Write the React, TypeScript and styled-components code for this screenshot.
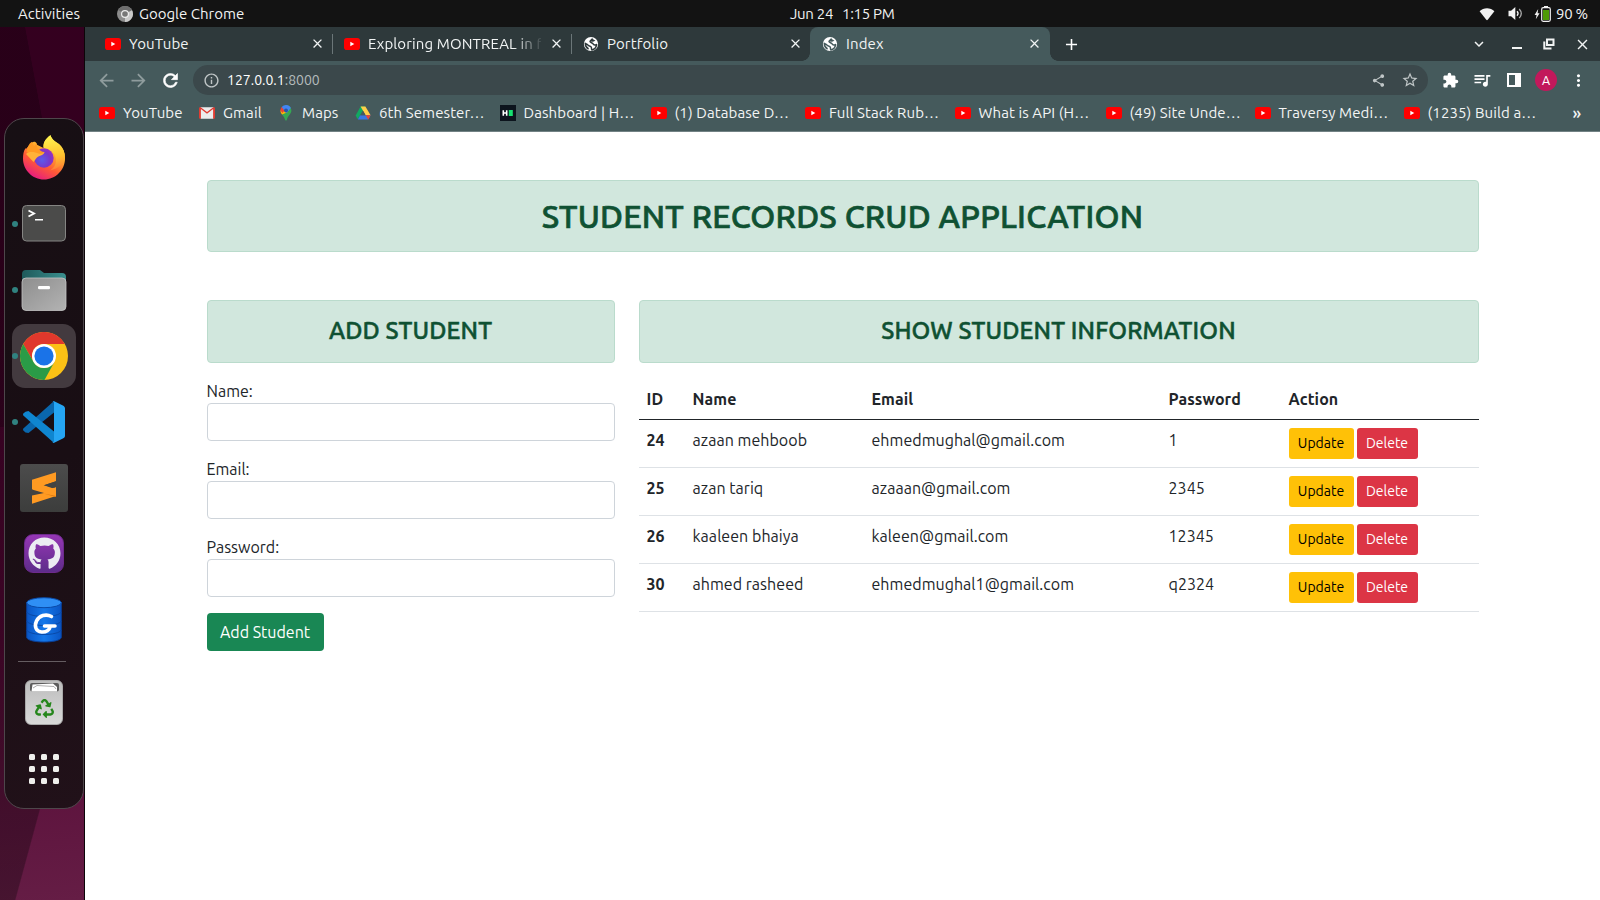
import React from 'react';
import styled, { createGlobalStyle, css } from 'styled-components';
import {
  MdAdd, MdArrowBack, MdArrowForward, MdClose, MdExpandMore, MdExtension, MdInfoOutline,
  MdMoreVert, MdQueueMusic, MdRefresh, MdShare, MdStarBorder,
} from 'react-icons/md';
import { FaGithub, FaRecycle } from 'react-icons/fa';

const GlobalStyle = createGlobalStyle`
  *, *::before, *::after { box-sizing: border-box; }
  body { margin: 0; overflow: hidden; font-family: Ubuntu, "Noto Sans", "Open Sans", sans-serif; }
  svg { display: block; flex: none; }
  button, input { font-family: inherit; margin: 0; }
`;

/* ---------- Desktop shell ---------- */

const Desktop = styled.div`
  width: 1600px;
  height: 900px;
  display: flex;
  flex-direction: column;
  overflow: hidden;
  background: #131313;
`;

const TopBar = styled.header`
  height: 27px;
  flex: none;
  display: flex;
  align-items: center;
  background: #131313;
  color: #f2f2f2;
  font-size: 15px;
  line-height: 27px;
  white-space: pre;
`;

const TopBarLeft = styled.div`
  width: 790px;
  padding-left: 18px;
  display: flex;
  align-items: center;
`;

const Activities = styled.span`
  width: 99px;
  letter-spacing: 0.05px;
`;

const AppName = styled.span`
  margin-left: 6px;
`;

const Clock = styled.div`
  flex: 1;
  letter-spacing: -0.3px;
`;

const Day = styled.span`
  display: inline-block;
  width: 52px;
`;

const Status = styled.div`
  display: flex;
  align-items: center;
  padding-right: 12px;
`;

const Percent = styled.span`
  width: 32px;
  letter-spacing: -0.3px;
`;

const Body = styled.div`
  flex: 1;
  display: flex;
  min-height: 0;
`;

const Wallpaper = styled.aside`
  width: 85px;
  flex: none;
  padding: 91px 0 0 4px;
  border-right: 1px solid #0c0509;
  background:
    linear-gradient(105.2deg, #0000004d 78.4%, transparent 78.8%),
    linear-gradient(79.4deg, #00000038 62.7%, transparent 63.1%) 0 0 / 84px 400px no-repeat,
    linear-gradient(175deg, #4a002d 0%, #4a002d 30%, #530734 70%, #651d45 100%);
`;

/* ---------- Dock ---------- */

const Dock = styled.nav`
  width: 80px;
  height: 691px;
  padding: 5px 0 0;
  border: 1px solid #4e474b;
  border-radius: 20px;
  background: linear-gradient(160deg, #170f14 0%, #190e14 50%, #211119 100%);
  display: flex;
  flex-direction: column;
  align-items: center;
`;

const DockCell = styled.div`
  width: 78px;
  height: 66px;
  flex: none;
  display: grid;
  grid-template-columns: 7px 64px 7px;
  align-items: center;
`;

const DockTile = styled.div<{ $active?: boolean; $drop?: number }>`
  grid-column: 2;
  height: 64px;
  margin-top: ${(p) => p.$drop ?? 0}px;
  border-radius: 13px;
  display: flex;
  align-items: center;
  justify-content: center;
  position: relative;
  ${(p) => p.$active && css`background: #433a3f;`}
`;

const RunningDot = styled.i`
  position: absolute;
  left: 0;
  top: 29px;
  width: 6px;
  height: 6px;
  border-radius: 50%;
  background: #308280;
`;

const DockDivider = styled.hr`
  width: 48px;
  height: 1px;
  border: 0;
  margin: 9px 4px 7px 0;
  background: #655d61;
  flex: none;
`;

const SublimeTile = styled.div`
  width: 48px;
  height: 48px;
  border-radius: 3px;
  background: linear-gradient(#4c4c4c, #3c3d3c);
  display: grid;
  place-items: center;
`;

const GithubTile = styled.div`
  width: 40px;
  height: 39px;
  border-radius: 9px;
  border: 1px solid #6d2a8c;
  background: linear-gradient(#9637b5, #5d2c8a);
  color: #ececf2;
  display: grid;
  place-items: center;
`;

const TrashTile = styled.div`
  width: 38px;
  height: 45px;
  padding-top: 1px;
  border-radius: 6px;
  border: 1px solid #a9a9a9;
  background: linear-gradient(#bdbdbd, #d9d9d9);
  color: #26861c;
  display: flex;
  flex-direction: column;
  align-items: center;
  gap: 7px;
`;

const AppsGrid = styled.div`
  display: grid;
  grid-template-columns: repeat(3, 6px);
  grid-auto-rows: 6px;
  gap: 6px;
`;

const AppsDot = styled.i`
  border-radius: 1.5px;
  background: #efefec;
`;

/* ---------- Browser chrome ---------- */

const Browser = styled.main`
  flex: 1;
  min-width: 0;
  display: flex;
  flex-direction: column;
  background: #fff;
`;

const TabStrip = styled.div`
  height: 34px;
  flex: none;
  display: flex;
  align-items: center;
  padding-left: 8px;
  background: #2e393b;
  color: #f1f4f4;
`;

const Tab = styled.div<{ $active?: boolean; $divided?: boolean }>`
  position: relative;
  width: 239px;
  height: 34px;
  flex: none;
  display: flex;
  align-items: center;
  padding: 0 7px 1px 12px;
  ${(p) => p.$divided && css`
    &::after {
      content: '';
      position: absolute;
      right: -1px;
      top: 7px;
      width: 1px;
      height: 20px;
      background: #6b7678;
    }
  `}
  ${(p) => p.$active && css`
    width: 240px;
    background: #455a5c;
    border-radius: 8px 8px 0 0;
    &::before, &::after {
      content: '';
      position: absolute;
      bottom: 0;
      width: 8px;
      height: 8px;
    }
    &::before { left: -8px; background: radial-gradient(circle at 0 0, transparent 7.5px, #455a5c 8px); }
    &::after { right: -8px; background: radial-gradient(circle at 100% 0, transparent 7.5px, #455a5c 8px); }
  `}
`;

const TabTitle = styled.span<{ $fade?: boolean }>`
  width: 173px;
  margin-left: 8px;
  margin-right: 7.5px;
  overflow: hidden;
  white-space: nowrap;
  font-size: 15px;
  line-height: 22px;
  letter-spacing: 0.12px;
  ${(p) => p.$fade && css`mask-image: linear-gradient(90deg, #000 145px, transparent 176px);`}
`;

const FaviconSlot = styled.span`
  width: 16px;
  flex: none;
  display: flex;
  justify-content: center;
  color: #fff;
`;

const NewTab = styled.div`
  margin: 0 auto 0 9px;
  width: 24px;
  display: flex;
  justify-content: center;
  color: #fff;
`;

const WindowControls = styled.div`
  display: grid;
  grid-template-columns: 44px 32px 32px 34px;
  justify-items: center;
  align-items: center;
  margin-right: 1px;
  color: #f1f3f3;
`;

const Toolbar = styled.div`
  height: 38px;
  flex: none;
  display: flex;
  align-items: center;
  background: #455a5c;
  color: #fff;
  padding: 0 6px 0 5px;
`;

const ToolButton = styled.div<{ $dim?: boolean; $w?: number }>`
  width: ${(p) => p.$w ?? 32}px;
  flex: none;
  display: flex;
  justify-content: center;
  color: ${(p) => (p.$dim ? '#8f9c9d' : '#fff')};
`;

const ReloadButton = styled(ToolButton)`
  path:last-child {
    stroke: currentColor;
    stroke-width: 0.7px;
  }
  path[fill='none'] {
    stroke: none;
  }
`;

const Omnibox = styled.div`
  flex: 1;
  height: 30px;
  margin: 0 6px 0 7px;
  padding: 0 2px 0 10px;
  border-radius: 15px;
  background: #3b484b;
  display: flex;
  align-items: center;
  color: #c0c6c7;
`;

const Url = styled.span`
  flex: 1;
  margin-left: 7px;
  font-size: 14px;
  line-height: 20px;
  color: #b5bcbd;
`;

const Host = styled.span`
  color: #fff;
`;

const Avatar = styled.div`
  width: 22px;
  height: 22px;
  margin: 0 5px;
  flex: none;
  border-radius: 50%;
  background: #c2185b;
  color: #fff;
  font-size: 12.5px;
  line-height: 22px;
  text-align: center;
`;

const BookmarksBar = styled.div`
  height: 33px;
  flex: none;
  display: flex;
  align-items: center;
  padding: 0 0 4px 14px;
  background: #455a5c;
  border-bottom: 1px solid #728284;
  color: #f3f5f5;
`;

const Bookmark = styled.div<{ $width: number }>`
  width: ${(p) => p.$width}px;
  flex: none;
  display: flex;
  align-items: center;
  gap: 8px;
  white-space: nowrap;
  font-size: 15px;
  line-height: 22px;
  letter-spacing: 0.1px;
`;

const More = styled.span`
  flex: 1;
  text-align: center;
  font-size: 17px;
  font-weight: 500;
  line-height: 20px;
  padding-left: 4px;
`;

/* ---------- Page ---------- */

const Page = styled.section`
  width: 1272px;
  margin-left: 121.5px;
  padding-top: 48px;
  color: #212529;
  font-size: 16px;
  line-height: 24px;
`;

const Banner = styled.div`
  padding: 16px;
  border: 1px solid #badbcc;
  border-radius: 4px;
  background: #d1e7dd;
  color: #0f5132;
  text-align: center;
`;

const PageTitle = styled.h1`
  margin: 0;
  font-size: 32px;
  font-weight: 500;
  line-height: 38.4px;
  letter-spacing: 0.23px;
  -webkit-text-stroke: 0.7px currentColor;
`;

const SectionTitle = styled.h2`
  margin: 0;
  font-size: 24px;
  font-weight: 500;
  line-height: 28.8px;
  letter-spacing: 0.14px;
  -webkit-text-stroke: 0.5px currentColor;
`;

const Columns = styled.div`
  margin-top: 47.6px;
  display: grid;
  grid-template-columns: 408px 840px;
  gap: 24px;
  align-items: start;
`;

const Form = styled.form`
  margin-top: 16px;
`;

const Field = styled.label`
  display: block;
  margin-bottom: 16px;
`;

const Input = styled.input`
  display: block;
  width: 100%;
  height: 38px;
  border: 1px solid #ced4da;
  border-radius: 4px;
  background: #fff;
`;

const SubmitButton = styled.button`
  width: 117px;
  height: 38px;
  padding: 0;
  border: 0;
  border-radius: 4px;
  background: #198754;
  color: #fff;
  font-size: 16px;
  line-height: 24px;
`;

const Table = styled.table`
  margin-top: 16px;
  width: 840px;
  table-layout: fixed;
  border-collapse: separate;
  border-spacing: 0;
`;

const Col = styled.col<{ $w: number }>`
  width: ${(p) => p.$w}px;
`;

const HeadCell = styled.th`
  height: 41px;
  padding: 8px;
  text-align: left;
  vertical-align: top;
  font-weight: 700;
  letter-spacing: 0.08px;
  border-bottom: 1px solid #212529;
`;

const Cell = styled.td<{ $bold?: boolean }>`
  height: 48px;
  padding: 8px;
  vertical-align: top;
  white-space: nowrap;
  font-weight: ${(p) => (p.$bold ? 700 : 400)};
  letter-spacing: 0.04px;
  border-bottom: 1px solid #dee2e6;
`;

const Actions = styled.div`
  display: flex;
  gap: 3px;
`;

const SmallButton = styled.button<{ $kind: 'warning' | 'danger' }>`
  width: ${(p) => (p.$kind === 'warning' ? 65 : 61)}px;
  height: 31px;
  padding: 0;
  border: 0;
  border-radius: 3px;
  font-size: 14px;
  line-height: 21px;
  background: ${(p) => (p.$kind === 'warning' ? '#ffc107' : '#dc3545')};
  color: ${(p) => (p.$kind === 'warning' ? '#000' : '#fff')};
`;

/* ---------- Drawings ---------- */

const YouTubeIcon = () => (
  <svg width="16" height="16" viewBox="0 0 16 16">
    <rect x="0" y="2" width="16" height="12" rx="2.8" fill="#f00" />
    <path d="M6.3 5.8 10.3 8 6.3 10.2Z" fill="#fff" />
  </svg>
);

const GlobeIcon = ({ ground }: { ground: string }) => (
  <svg width="16" height="16" viewBox="0 0 16 16">
    <circle cx="8" cy="8" r="7.100" fill="#fff" />
    <path d="M9 2.400C9.600 4 7.200 4 7 5.600 7 7 9.600 6.600 10.200 8 10.600 9.400 11.800 9 13.600 8.600 13.200 11.400 11.400 13.400 8.800 13.900 8 12.400 9 11.800 8 10.800 6.600 9.800 5.400 10.200 4.600 8.600L2.300 7.400C2.400 10 3.600 12 5.600 13" fill="none" stroke={ground} strokeWidth="1.500" strokeLinejoin="round" />
    <path d="M9 2.400 12.500 4.800 10 5.800 7 5.600Z" fill={ground} />
  </svg>
);

const GmailIcon = () => (
  <svg width="16" height="16" viewBox="0 0 16 16">
    <rect x="1" y="2.3" width="14" height="11.4" rx="1.2" fill="#ececec" />
    <path d="M1.9 13.7V4L8 8.8 14.1 4v9.7H15a1 1 0 0 0 1-1V3.500c0-1.200-1.200-1.600-2-1L8 6.900 2 2.500c-.9-.6-2-.1-2 1v9.200a1 1 0 0 0 1 1Z" fill="#e03c32" />
  </svg>
);

const MapsIcon = () => (
  <svg width="16" height="16" viewBox="0 0 16 16">
    <path d="M8 0a5.600 5.600 0 0 1 5.400 5.600C13.400 9 10 10.500 9 14.600 8.700 16 7.300 16 7 14.600 6.500 12.600 5.200 11 4 9.500Z" fill="#34a853" />
    <path d="M4 9.500C3 8.300 2.400 7.200 2.400 5.600L6 3.500 10 7Z" fill="#fbbc04" />
    <path d="M2.400 5.600c0-1.300.5-2.500 1.300-3.500L7 5 4.500 8Z" fill="#ea4335" />
    <path d="M3.700 2.100A5.600 5.600 0 0 1 8 0c2.200 0 4 1.200 4.900 3L8.500 8 6 5Z" fill="#4285f4" />
    <circle cx="8" cy="5.600" r="2" fill="#2a56a8" />
  </svg>
);

const DriveIcon = () => (
  <svg width="16" height="16" viewBox="0 0 16 16">
    <path d="M5.600 1.400h4.800L5.300 10 2.700 14.300.6 10.400Z" fill="#11a861" />
    <path d="M5.600 1.400h4.800L15.600 10.300h-5Z" fill="#ffcf49" />
    <path d="M5.200 10.300h10.400l-2.400 4.200H2.800Z" fill="#3777e3" />
    <path d="m10.600 10.300h5l-2.400 4.200Z" fill="#e94335" />
    <path d="M8 5.800 10.600 10.300H5.300Z" fill="#455a5c" />
  </svg>
);

const HackerEarthIcon = () => (
  <svg width="16" height="16" viewBox="0 0 16 16">
    <rect width="16" height="16" fill="#0c141d" />
    <path d="M3.300 5.300v5.500M6.700 5.300v5.500M3.300 8h3.400" stroke="#fff" strokeWidth="1.600" fill="none" />
    <rect x="8.800" y="5" width="4" height="6" fill="#16e070" />
  </svg>
);

const ChromeGrayIcon = () => (
  <svg width="16" height="16" viewBox="0 0 16 16">
    <circle cx="8" cy="8" r="8" fill="#8c8c8c" />
    <path d="M8 8 1.100 4A8 8 0 0 1 15 4.200Z" fill="#6e6e6e" />
    <path d="M8 8 15 4.200A8 8 0 0 1 8 16Z" fill="#c9c9c9" />
    <circle cx="8" cy="8" r="4" fill="#ececec" />
    <circle cx="8" cy="8" r="2.800" fill="#777" />
  </svg>
);

const WifiIcon = () => (
  <svg width="16" height="14" viewBox="0 0 16 14">
    <path d="M.6 4.300C4.500.1 11.500.1 15.400 4.300L8.700 12.800c-.4.500-1 .5-1.400 0Z" fill="#f2f2f2" />
  </svg>
);

const VolumeIcon = () => (
  <svg width="15" height="15" viewBox="0 0 15 15">
    <path d="M.5 4.800h2.600L7.300 1v13L3.100 10.200H.5Z" fill="#f2f2f2" />
    <path d="M9 5.200c1.300 1.400 1.300 3.200 0 4.600" stroke="#f2f2f2" strokeWidth="1.300" fill="none" />
    <path d="M11.200 3c2.600 2.800 2.600 6.200 0 9" stroke="#aaa" strokeWidth="1.300" fill="none" />
  </svg>
);

const BatteryIcon = () => (
  <svg width="17" height="16" viewBox="0 0 17 16">
    <path d="M4.200 3 .6 9h2l-.8 4.300L5.600 7.200H3.600Z" fill="#f2f2f2" />
    <rect x="10" y="0" width="4" height="2" fill="#f2f2f2" />
    <rect x="7.700" y="1.700" width="8.600" height="13.600" rx="1.500" fill="#131313" stroke="#f2f2f2" strokeWidth="1.200" />
    <rect x="9" y="4" width="6" height="10" fill="#4e9a06" />
  </svg>
);

const RestoreIcon = () => (
  <svg width="12" height="12" viewBox="0 0 12 12" fill="none" stroke="currentColor" strokeWidth="2">
    <path d="M4 1.500h6.500V7H4Z" />
    <path d="M1.300 3.500v7H8.500" />
  </svg>
);

const MinimizeIcon = () => (
  <svg width="12" height="12" viewBox="0 0 12 12"><rect x="1" y="9" width="10" height="2" fill="currentColor" /></svg>
);

const SidePanelIcon = () => (
  <svg width="14" height="14" viewBox="0 0 14 14">
    <path d="M0 0h14v14H0ZM2 2v10h6V2Z" fill="#fff" fillRule="evenodd" />
  </svg>
);

const FirefoxIcon = () => (
  <svg width="44" height="46" viewBox="0 0 44 46">
    <defs>
      <linearGradient id="ffBody" x1=".8" y1="0" x2=".25" y2="1">
        <stop offset="0" stopColor="#fff44f" />
        <stop offset=".35" stopColor="#ffb02e" />
        <stop offset=".65" stopColor="#ff5a36" />
        <stop offset="1" stopColor="#e31587" />
      </linearGradient>
      <linearGradient id="ffFlame" x1=".6" y1="0" x2=".7" y2="1">
        <stop offset="0" stopColor="#fff44f" />
        <stop offset=".6" stopColor="#ffc02e" />
        <stop offset="1" stopColor="#ff7a38" />
      </linearGradient>
      <radialGradient id="ffGlobe" cx=".4" cy=".6" r=".7">
        <stop offset="0" stopColor="#5b5bea" />
        <stop offset=".6" stopColor="#7a36c8" />
        <stop offset="1" stopColor="#a32fc0" />
      </radialGradient>
    </defs>
    <path d="M9.500 8C9 11 9.300 12.500 10 13.500L14 13 15 10C11 2 4 18 3.500 14 1.500 17 1 21 1 24.500 1 36 10.500 45.500 22 45.500S43 36 43 24.500c0-6-2-11-6-14.500-4-3-7-4-8.500-8.500C23 5 21 9 21.500 14Z" fill="url(#ffBody)" />
    <path d="M28.500 1C23 5 20.500 10 22 14.500c8 1 12 6 12 12 0 5-3 8-6 10 9-2 14-7 15-13 0-5-2-9.500-5-12.500-3-2.500-8-4.500-9.500-10Z" fill="url(#ffFlame)" />
    <circle cx="22" cy="24" r="9.700" fill="url(#ffGlobe)" />
    <path d="M9.500 8C7 9.500 5.500 13 4.500 18l10 4.500c3-2.500 6.500-1.500 8-4.500-3 0-4-2-7-3.300l-1-5.200-2.500 3Z" fill="#ff9a22" />
    <path d="M4 20c3-3 9-2 12.500-.5 2 1 5-.5 6-1.500-1 4-6 3.500-8 6l-3 4Z" fill="#ffb238" />
  </svg>
);

const TerminalIcon = () => (
  <svg width="44" height="37" viewBox="0 0 44 37">
    <rect x=".5" y=".5" width="43" height="35.500" rx="4" fill="#4b4b4a" stroke="#858583" />
    <path d="M6.500 5.500 12 8.500 6.500 11.500" fill="none" stroke="#fff" strokeWidth="1.900" />
    <rect x="13" y="14" width="8" height="1.500" fill="#fff" />
  </svg>
);

const FilesIcon = () => (
  <svg width="46" height="42" viewBox="0 0 46 42">
    <defs>
      <linearGradient id="fold" x1="0" y1="0" x2="1" y2="1">
        <stop offset="0" stopColor="#8e8e8e" />
        <stop offset="1" stopColor="#b3b3b3" />
      </linearGradient>
      <linearGradient id="foldBack" x1="0" y1="0" x2="1" y2="0">
        <stop offset="0" stopColor="#1f5a5b" />
        <stop offset="1" stopColor="#3a8f8e" />
      </linearGradient>
    </defs>
    <path d="M1 16V5a4 4 0 0 1 4-4h14l4 3h18a4 4 0 0 1 4 4v22H1Z" fill="url(#foldBack)" />
    <rect x="1" y="9" width="44" height="32.500" rx="4" fill="url(#fold)" stroke="#c4c4c4" strokeWidth=".8" />
    <rect x="17" y="17" width="12" height="3.200" rx="1.300" fill="#fff" />
  </svg>
);

const ChromeIcon = () => (
  <svg width="48" height="48" viewBox="0 0 48 48">
    <circle cx="24" cy="24" r="24" fill="#fbc116" />
    <path d="M3.200 12A24 24 0 0 1 44.800 12H24A12 12 0 0 0 13.600 30Z" fill="#e0382c" />
    <path d="M3.200 12 13.600 30A12 12 0 0 0 34.400 30L24.500 48A24 24 0 0 1 3.200 12Z" fill="#2a9b47" />
    <circle cx="24" cy="24" r="12" fill="#fff" />
    <circle cx="24" cy="24" r="9.600" fill="#1a73e8" />
  </svg>
);

const VsCodeIcon = () => (
  <svg width="42" height="42" viewBox="0 0 42 42">
    <path d="M31 0 31 11.500 5.500 32 2.500 31.500.6 29.800c-.8-.8-.8-1.700 0-2.500Z" fill="#0a67ad" />
    <path d="M31 42V30.500L5.500 10 2.500 10.700.6 12.300c-.8.8-.8 1.700 0 2.500Z" fill="#0f86d0" />
    <path d="M31.200 41.800c-1 .4-2 .2-2.700-.5 1 .8 2.500.2 2.500-1.100V1.800C31 .5 29.500-.1 28.500.7c.7-.7 1.700-.9 2.700-.5l8.700 4.200c1.200.6 2.100 1.500 2.100 2.800v27.600c0 1.300-.9 2.300-2.100 2.800Z" fill="#25a5f3" />
  </svg>
);

const SublimeIcon = () => (
  <svg width="24" height="32" viewBox="0 0 24 32">
    <path d="M0 7.800 24 .3v9L0 17.300Z" fill="#ff9a22" />
    <path d="M0 22.500 24 15v9L0 31.700Z" fill="#ff9a22" />
    <path d="M0 9v7.500c0 1 .5 1.800 1.500 2.200L24 25V17.500Z" fill="#ff9a22" />
    <path d="M11.500 21.600 24 25 24 24Z" fill="#d9760f" />
    <path d="M12 13.300 24 9.300V15l-2 .7Z" fill="#424342" />
    <path d="M0 17.400 12 21 0 23.600Z" fill="#424342" />
  </svg>
);

const DatabaseIcon = () => (
  <svg width="36" height="46" viewBox="0 0 36 46">
    <defs>
      <linearGradient id="db" x1="0" y1="0" x2="1" y2="0">
        <stop offset="0" stopColor="#0a55c4" />
        <stop offset=".5" stopColor="#1478ea" />
        <stop offset="1" stopColor="#0a55c4" />
      </linearGradient>
    </defs>
    <path d="M.7 5.500v35C2 46.500 34 46.500 35.300 40.500v-35Z" fill="url(#db)" stroke="#0a3f96" />
    <ellipse cx="18" cy="5.700" rx="17.300" ry="5" fill="#2f8ff5" stroke="#0a4aa8" />
    <path d="M.7 15c3 6 31.600 6 34.600 0M.7 24c3 6 31.600 6 34.600 0M.7 33c3 6 31.600 6 34.600 0" fill="none" stroke="#0a4aa8" />
    <path d="M25.500 19.500C20 16.500 13 18.500 10.500 24c-2.500 5.500-.5 10.500 5 11 4.500.4 8-2 9-6h-6M24.500 29H29" fill="none" stroke="#fff" strokeWidth="3.600" strokeLinecap="round" strokeLinejoin="round" />
  </svg>
);

const TrashPaper = () => (
  <svg width="31" height="10" viewBox="0 0 31 10">
    <rect x="1" y="1" width="29" height="8.500" rx="2" fill="#5c5c5c" />
    <path d="M3.500 2.500 24 1.500 28 5v4.500H2.500Z" fill="#fff" />
    <path d="M4 6 8 3.500 25 4.500 27 7" fill="none" stroke="#999" strokeWidth=".8" />
  </svg>
);

/* ---------- Data ---------- */

const tabs = [
  { title: 'YouTube', icon: <YouTubeIcon />, divided: true },
  { title: 'Exploring MONTREAL in f', icon: <YouTubeIcon />, divided: true, fade: true },
  { title: 'Portfolio', icon: <GlobeIcon ground="#2e393b" /> },
  { title: 'Index', icon: <GlobeIcon ground="#455a5c" />, active: true },
];

const bookmarks = [
  { title: 'YouTube', icon: <YouTubeIcon />, width: 100 },
  { title: 'Gmail', icon: <GmailIcon />, width: 79 },
  { title: 'Maps', icon: <MapsIcon />, width: 77 },
  { title: '6th Semester…', icon: <DriveIcon />, width: 144.5 },
  { title: 'Dashboard | H…', icon: <HackerEarthIcon />, width: 151 },
  { title: '(1) Database D…', icon: <YouTubeIcon />, width: 154.5 },
  { title: 'Full Stack Rub…', icon: <YouTubeIcon />, width: 149.5 },
  { title: 'What is API (H…', icon: <YouTubeIcon />, width: 151 },
  { title: '(49) Site Unde…', icon: <YouTubeIcon />, width: 149 },
  { title: 'Traversy Medi…', icon: <YouTubeIcon />, width: 149 },
  { title: '(1235) Build a…', icon: <YouTubeIcon />, width: 146 },
];

const students = [
  { id: 24, name: 'azaan mehboob', email: 'ehmedmughal@gmail.com', password: '1' },
  { id: 25, name: 'azan tariq', email: 'azaaan@gmail.com', password: '2345' },
  { id: 26, name: 'kaaleen bhaiya', email: 'kaleen@gmail.com', password: '12345' },
  { id: 30, name: 'ahmed rasheed', email: 'ehmedmughal1@gmail.com', password: 'q2324' },
];

const dockApps = [
  { name: 'firefox', icon: <FirefoxIcon /> },
  { name: 'terminal', icon: <TerminalIcon />, running: true, drop: 1 },
  { name: 'files', icon: <FilesIcon />, running: true, drop: 1 },
  { name: 'chrome', icon: <ChromeIcon />, running: true, active: true, drop: 1 },
  { name: 'code', icon: <VsCodeIcon />, running: true, drop: 2 },
  { name: 'sublime', icon: <SublimeTile><SublimeIcon /></SublimeTile>, drop: 2 },
  { name: 'github', icon: <GithubTile><FaGithub size={33} /></GithubTile> },
  { name: 'database', icon: <DatabaseIcon />, drop: 2 },
];

export default function App() {
  return (
    <Desktop>
      <GlobalStyle />
      <TopBar>
        <TopBarLeft>
          <Activities>Activities</Activities>
          <ChromeGrayIcon />
          <AppName>Google Chrome</AppName>
        </TopBarLeft>
        <Clock><Day>Jun 24</Day>1:15 PM</Clock>
        <Status>
          <ToolButton $w={28}><WifiIcon /></ToolButton>
          <ToolButton $w={28}><VolumeIcon /></ToolButton>
          <ToolButton $w={27}><BatteryIcon /></ToolButton>
          <Percent>90 %</Percent>
        </Status>
      </TopBar>

      <Body>
        <Wallpaper>
          <Dock>
            {dockApps.map((app) => (
              <DockCell key={app.name}>
                <DockTile $active={app.active} $drop={app.drop}>
                  {app.running && <RunningDot />}
                  {app.icon}
                </DockTile>
              </DockCell>
            ))}
            <DockDivider />
            <DockCell>
              <DockTile><TrashTile><TrashPaper /><FaRecycle size={19} /></TrashTile></DockTile>
            </DockCell>
            <DockCell>
              <DockTile $drop={1}>
                <AppsGrid>{Array.from({ length: 9 }, (_, i) => <AppsDot key={i} />)}</AppsGrid>
              </DockTile>
            </DockCell>
          </Dock>
        </Wallpaper>

        <Browser>
          <TabStrip>
            {tabs.map((t) => (
              <Tab key={t.title} $active={t.active} $divided={t.divided}>
                <FaviconSlot>{t.icon}</FaviconSlot>
                <TabTitle $fade={t.fade}>{t.title}</TabTitle>
                <MdClose size={15} />
              </Tab>
            ))}
            <NewTab><MdAdd size={19} /></NewTab>
            <WindowControls>
              <MdExpandMore size={18} />
              <MinimizeIcon />
              <RestoreIcon />
              <MdClose size={17} />
            </WindowControls>
          </TabStrip>

          <Toolbar>
            <ToolButton $dim><MdArrowBack size={21} /></ToolButton>
            <ToolButton $dim><MdArrowForward size={21} /></ToolButton>
            <ReloadButton><MdRefresh size={21} /></ReloadButton>
            <Omnibox>
              <MdInfoOutline size={17} />
              <Url><Host>127.0.0.1</Host>:8000</Url>
              <ToolButton $dim><MdShare size={15} color="#c0c6c7" /></ToolButton>
              <ToolButton $dim><MdStarBorder size={18} color="#c0c6c7" /></ToolButton>
            </Omnibox>
            <ToolButton><MdExtension size={17} /></ToolButton>
            <ToolButton><MdQueueMusic size={20} /></ToolButton>
            <ToolButton><SidePanelIcon /></ToolButton>
            <Avatar>A</Avatar>
            <ToolButton><MdMoreVert size={19} /></ToolButton>
          </Toolbar>

          <BookmarksBar>
            {bookmarks.map((b) => (
              <Bookmark key={b.title} $width={b.width}>
                {b.icon}
                {b.title}
              </Bookmark>
            ))}
            <More>»</More>
          </BookmarksBar>

          <Page>
            <Banner><PageTitle>STUDENT RECORDS CRUD APPLICATION</PageTitle></Banner>
            <Columns>
              <div>
                <Banner><SectionTitle>ADD STUDENT</SectionTitle></Banner>
                <Form>
                  <Field>Name:<Input /></Field>
                  <Field>Email:<Input /></Field>
                  <Field>Password:<Input /></Field>
                  <SubmitButton type="button">Add Student</SubmitButton>
                </Form>
              </div>
              <div>
                <Banner><SectionTitle>SHOW STUDENT INFORMATION</SectionTitle></Banner>
                <Table>
                  <colgroup>
                    <Col $w={46} /><Col $w={179} /><Col $w={297} /><Col $w={120} /><Col $w={198} />
                  </colgroup>
                  <thead>
                    <tr>
                      {['ID', 'Name', 'Email', 'Password', 'Action'].map((h) => <HeadCell key={h}>{h}</HeadCell>)}
                    </tr>
                  </thead>
                  <tbody>
                    {students.map((s) => (
                      <tr key={s.id}>
                        <Cell $bold>{s.id}</Cell>
                        <Cell>{s.name}</Cell>
                        <Cell>{s.email}</Cell>
                        <Cell>{s.password}</Cell>
                        <Cell>
                          <Actions>
                            <SmallButton $kind="warning">Update</SmallButton>
                            <SmallButton $kind="danger">Delete</SmallButton>
                          </Actions>
                        </Cell>
                      </tr>
                    ))}
                  </tbody>
                </Table>
              </div>
            </Columns>
          </Page>
        </Browser>
      </Body>
    </Desktop>
  );
}
